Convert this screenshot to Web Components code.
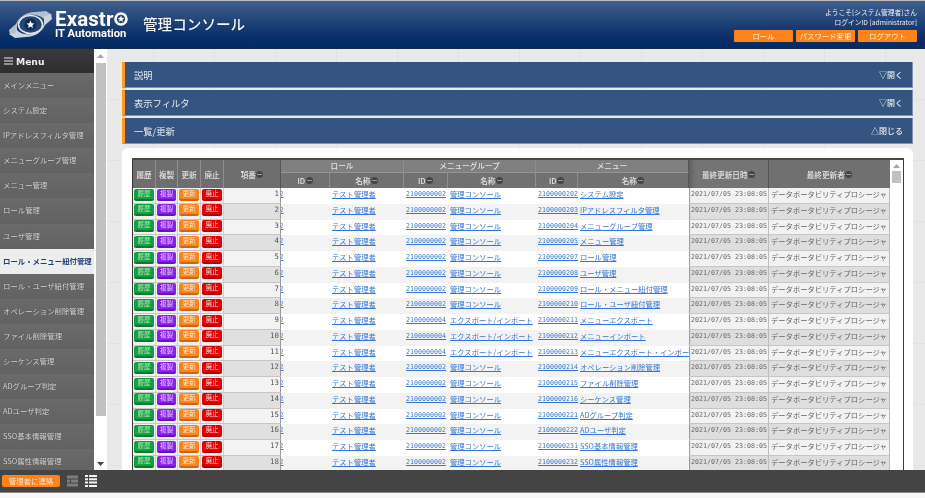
<!DOCTYPE html>
<html lang="ja"><head><meta charset="utf-8"><title>管理コンソール</title>
<style>
html,body{margin:0;padding:0;height:100%;background:#f4f4f4;overflow:hidden}
body{font-family:"Noto Sans CJK JP","Liberation Sans",sans-serif}
</style></head><body>
<x-app></x-app>
<script>
const FONT='"Noto Sans CJK JP","Liberation Sans",sans-serif';
function def(name,css,html,init){
  customElements.define(name,class extends HTMLElement{
    constructor(){super();this.attachShadow({mode:'open'}).innerHTML='<style>'+css+'</style>'+html;}
    connectedCallback(){if(init&&!this._d){this._d=1;init.call(this,this.shadowRoot);}}
  });
}
def('x-logo',`:host{display:block;width:125px;height:32px}
 .w{display:flex;align-items:center;height:100%;gap:2px}
 .t{display:flex;flex-direction:column;color:#fff;font-family:Roboto,"Liberation Sans",sans-serif;font-weight:700;padding-top:1px}
 .a{display:flex;align-items:center;font-size:20.5px;line-height:16px;height:16px;letter-spacing:.1px}
 .b{font-size:11.2px;line-height:11px;height:11px;margin-top:1px}`,
 `<div class="w"><svg width="45" height="29" viewBox="0 0 45 29">
  <path d="M1 20 L8 14 C11 7 18 2 27 2 L38 1 L44 5 L37 6 L37 10 C33 5 26 4 21 5 C14 6 9 11 9 17 L9 23 L2 25Z" fill="#b4bfce"/>
  <path d="M44 9 L37 15 C34 22 27 27 18 27 L7 28 L1 24 L8 23 L8 19 C12 24 19 25 24 24 C31 23 36 18 36 12 L36 6 L43 4Z" fill="#ccd4e0"/>
  <ellipse cx="22.500" cy="14.500" rx="12" ry="9" fill="#234675" stroke="#e6eaf0" stroke-width="1.500"/>
  <circle cx="22.500" cy="14.500" r="6" fill="#0f2c58"/>
  <path d="M22.500 10.500l1.100 2.700 2.900.2-2.200 1.900.7 2.800-2.500-1.500-2.500 1.500.7-2.800-2.200-1.900 2.900-.2z" fill="#fff"/>
 </svg>
 <div class="t"><div class="a">Exastr<svg width="14" height="14" viewBox="0 0 14 14" style="margin-left:.5px"><circle cx="7" cy="7" r="5.500" fill="none" stroke="#fff" stroke-width="2.600"/><path d="M7 3.600l.9 2.200 2.400.1-1.900 1.500.7 2.300-2.100-1.300-2.100 1.300.7-2.300-1.900-1.500 2.400-.1z" fill="#fff"/></svg></div><div class="b">IT Automation</div></div></div>`);
def('x-header',`:host{display:flex;height:47px;border-top:1px solid #bcbcbc;border-bottom:1px solid #14284a;background:linear-gradient(#3f5f8c,#0a3069 75%,#002a66);align-items:center;padding:0 8px;box-sizing:content-box;color:#fff}
 h1{margin:0 0 0 10px;font:500 14.6px/1 ${FONT};color:#f4f6fa;text-shadow:0 0 1px #0b1f40}
 .sp{flex:1}
 .u{display:flex;flex-direction:column;align-items:flex-end;font-size:6.75px;line-height:10px;color:#eef1f5;margin-top:-1px}
 .bs{display:flex;gap:3px;margin-top:3px}`,
 `<x-logo></x-logo><h1>管理コンソール</h1><div class="sp"></div>
 <div class="u"><div>ようこそ[システム管理者]さん</div><div>ログインID [administrator]</div>
 <div class="bs"><x-hbtn>ロール</x-hbtn><x-hbtn>パスワード変更</x-hbtn><x-hbtn>ログアウト</x-hbtn></div></div>`);
def('x-hbtn',`:host{display:block;width:59px;height:12px;background:#ff8318;border-radius:1px;color:#fff2e4;font-size:7.4px;line-height:12px;text-align:center;white-space:nowrap}`,'<slot></slot>');
def('x-side-item',`:host{display:block;height:25.1px;line-height:23px;padding-left:3px;font-size:7.4px;color:#d6d6d6;background:linear-gradient(#6a6a6a,#626262);white-space:nowrap;overflow:hidden;text-shadow:0 0 1px #444}
 :host([active]){background:#ededed;color:#1d3d78;font-weight:700;text-shadow:none}`,'<slot></slot>');
const MENU=['メインメニュー','システム設定','IPアドレスフィルタ管理','メニューグループ管理','メニュー管理','ロール管理','ユーザ管理','ロール・メニュー紐付管理','ロール・ユーザ紐付管理','オペレーション削除管理','ファイル削除管理','シーケンス管理','ADグループ判定','ADユーザ判定','SSO基本情報管理','SSO属性情報管理'];
def('x-sidebar',`:host{display:flex;height:100%;flex:none;overflow:hidden}
 .m{width:94px;background:#636363;display:flex;flex-direction:column;overflow:hidden}
 .h{height:24px;flex:none;background:linear-gradient(#3a3a3a,#2e2e2e);color:#eee;display:flex;align-items:center;font:700 9.2px "DejaVu Sans",sans-serif;padding-left:4px;gap:3px}
 .sb{width:13px;box-sizing:border-box;background:#fff;display:flex;flex-direction:column;align-items:center;padding:0 1px}
 .up,.dn{flex:none;height:14px;display:flex;align-items:center;justify-content:center}
 .tr{flex:none;width:10px;height:353px;background:#c1c1c1}.fill{flex:1}
 .dn{height:12px}`,
 `<div class="m"><div class="h"><svg width="9" height="8" viewBox="0 0 9 8"><path d="M0 1h9M0 4h9M0 7h9" stroke="#eee" stroke-width="1.200"/></svg>Menu</div><div id="l"></div></div>
 <div class="sb"><div class="up"><svg width="7" height="4" viewBox="0 0 7 4"><path d="M3.500 0L7 4H0z" fill="#a8a8a8"/></svg></div><div class="tr"></div><div class="fill"></div><div class="dn"><svg width="7" height="4" viewBox="0 0 7 4"><path d="M3.500 4L7 0H0z" fill="#444"/></svg></div></div>`,
 function(r){const l=r.getElementById('l');MENU.forEach((t,i)=>{const e=document.createElement('x-side-item');e.textContent=t;if(i==7)e.setAttribute('active','');l.appendChild(e);});});
def('x-panel',`:host{display:flex;height:25px;flex:none;background:#34557f;border-left:3px solid #ff9a1f;border-right:1px solid #7d93b0;border-bottom:1px solid #7d93b0;box-sizing:content-box;align-items:center;justify-content:space-between;padding:0 9px;color:#e6eaf0;font-size:9.3px}
 .r{font-size:8px;font-weight:500}`,'<span><slot></slot></span><span class="r"><slot name="r"></slot></span>');
def('x-sort',`:host{display:inline-block;width:7px;height:7px;border-radius:50%;background:#454545;position:relative;margin-left:.5px;flex:none}
 :host::after{content:"";position:absolute;left:1px;right:1px;top:3px;height:1px;background:#9a9a9a}`,'');
def('x-btn',`:host{display:block;box-sizing:border-box;width:19.500px;height:12px;margin:.5px auto 0;border-radius:2px;font-size:6.6px;line-height:9.500px;text-align:center;white-space:nowrap;color:var(--t,#fff);background:var(--c);border-bottom:2px solid var(--d)}`,'<slot></slot>');
const COLS='23px 22px 23px 23px 57px 49px 74px 44px 88px 42px 111px 80px 121px';
def('x-row',`:host{display:grid;grid-template-columns:${COLS};height:15.75px;font-size:7.3px;line-height:12.5px;white-space:nowrap}
 .c{overflow:hidden;min-width:0}
 .l{background:#f3f3f3;border-right:1px solid #cfcfcf;border-bottom:1px solid #c6c6c6;box-sizing:border-box;height:15.75px}
 :host([even]) .l{background:#f0f0f0}
 .n{text-align:right;padding-right:1px;color:#555;font:7.4px/12.5px "DejaVu Sans Mono",monospace;background:#f3f3f3;border-right:1px solid #9a9a9a}
 :host([even]) .n{background:#e0e0e0}
 .b{background:#fff}:host([even]) .b{background:#f3f3f3}
 a{color:#3377dc;text-decoration:underline}
 .m{font:6.65px/12.5px "DejaVu Sans Mono",monospace}
 .p{padding-left:2px}
 .d{background:#f2f2f2;color:#666;border-right:1px solid #bdbdbd;border-bottom:1px solid #c6c6c6;box-sizing:border-box;height:15.75px;padding-left:2px}
 :host([even]) .d{background:#dedede}
 .dt{font:6.65px/12.5px "DejaVu Sans Mono",monospace;box-shadow:inset 2px 0 1px -1px #999}`,
 `<div class="c l"><x-btn style="--c:#11a03c;--d:#0a7a2c;--t:#a9e6b9">履歴</x-btn></div>
 <div class="c l"><x-btn style="--c:#8a1ff2;--d:#6a12c0;--t:#e3cdfb">複製</x-btn></div>
 <div class="c l"><x-btn style="--c:#ff8318;--d:#d0660c;--t:#ffe9d4">更新</x-btn></div>
 <div class="c l"><x-btn style="--c:#e20000;--d:#b00000;--t:#ffd8d8">廃止</x-btn></div>
 <div class="c l n" id="n"></div>
 <div class="c b m"><a style="margin-left:-1.5px">2</a></div>
 <div class="c b p"><a>テスト管理者</a></div>
 <div class="c b m p"><a id="gi"></a></div>
 <div class="c b p"><a id="gn"></a></div>
 <div class="c b m p"><a id="mi"></a></div>
 <div class="c b p"><a id="mn"></a></div>
 <div class="c d dt">2021/07/05 23:08:05</div>
 <div class="c d">データポータビリティプロシージャ</div>`,
 function(r){for(const k of ['n','gi','gn','mi','mn'])r.getElementById(k).textContent=this.getAttribute(k);});
const G='管理コンソール',E='エクスポート/インポート';
const ROWS=[[2,G,202,'システム設定'],[2,G,203,'IPアドレスフィルタ管理'],[2,G,204,'メニューグループ管理'],[2,G,205,'メニュー管理'],[2,G,207,'ロール管理'],[2,G,208,'ユーザ管理'],[2,G,209,'ロール・メニュー紐付管理'],[2,G,210,'ロール・ユーザ紐付管理'],[4,E,211,'メニューエクスポート'],[4,E,212,'メニューインポート'],[4,E,213,'メニューエクスポート・インポート管理'],[2,G,214,'オペレーション削除管理'],[2,G,215,'ファイル削除管理'],[2,G,216,'シーケンス管理'],[2,G,221,'ADグループ判定'],[2,G,222,'ADユーザ判定'],[2,G,231,'SSO基本情報管理'],[2,G,232,'SSO属性情報管理']];
def('x-grid',`:host{display:flex;box-sizing:border-box;border:1px solid #3a3a3a;border-top:2px solid #4a4a4a;border-bottom:0;width:772px;height:312px;overflow:hidden;flex:none}
 .t{width:757px;flex:none;overflow:hidden}
 .hd{display:grid;grid-template-columns:${COLS};grid-template-rows:13px 15px;color:#e4e4e4;font-size:7.6px;font-weight:500;text-align:center}
 .hd>div{display:flex;align-items:center;justify-content:center;background:#6e6e6e;border-right:1px solid #8e8e8e;white-space:nowrap;overflow:hidden}
 .hd .g{background:#808080;border-bottom:1px solid #959595;padding-bottom:2px;box-sizing:border-box}
 .hd .s{background:#717171}
 .hd .z{background:linear-gradient(90deg,#5f5f5f,#747474 6px);border-right:1px solid #555}
 .hd .y{background:#707070;border-right:0}
 .sb{width:13px;flex:none;background:#fff;display:flex;flex-direction:column;align-items:center;padding-top:4px;box-sizing:border-box}
 .th{width:9px;height:12px;background:#c1c1c1;margin-top:3px}`,
 `<div class="t"><div class="hd">
 <div style="grid-row:1/3">履歴</div><div style="grid-row:1/3">複製</div><div style="grid-row:1/3">更新</div><div style="grid-row:1/3">廃止</div>
 <div style="grid-row:1/3;border-right-color:#555">項番<x-sort></x-sort></div>
 <div class="g" style="grid-column:6/8">ロール</div><div class="g" style="grid-column:8/10">メニューグループ</div><div class="g" style="grid-column:10/12;border-right-color:#555">メニュー</div>
 <div class="z" style="grid-column:12;grid-row:1/3">最終更新日時<x-sort></x-sort></div><div class="y" style="grid-column:13;grid-row:1/3">最終更新者<x-sort></x-sort></div>
 <div class="s" style="grid-column:6;grid-row:2">ID<x-sort></x-sort></div><div class="s" style="grid-column:7;grid-row:2">名称<x-sort></x-sort></div>
 <div class="s" style="grid-column:8;grid-row:2">ID<x-sort></x-sort></div><div class="s" style="grid-column:9;grid-row:2">名称<x-sort></x-sort></div>
 <div class="s" style="grid-column:10;grid-row:2">ID<x-sort></x-sort></div><div class="s" style="grid-column:11;grid-row:2;border-right-color:#555">名称<x-sort></x-sort></div>
 </div><div id="b"></div></div>
 <div class="sb"><svg width="7" height="4" viewBox="0 0 7 4"><path d="M3.500 0L7 4H0z" fill="#a8a8a8"/></svg><div class="th"></div></div>`,
 function(r){const b=r.getElementById('b');ROWS.forEach((x,i)=>{const e=document.createElement('x-row');
  e.setAttribute('n',i+1);e.setAttribute('gi','210000000'+x[0]);e.setAttribute('gn',x[1]);e.setAttribute('mi','2100000'+x[2]);e.setAttribute('mn',x[3]);if(i%2)e.setAttribute('even','');b.appendChild(e);});});
def('x-footer',`:host{display:flex;flex:none;height:22px;background:#444;align-items:center;padding-left:2px;gap:7px;border-bottom:1px solid #8a8a8a}
 .o{width:58px;height:12px;background:#ff8318;border-radius:2px;color:#ffe7d0;font-size:7.4px;line-height:12px;text-align:center}
 svg{display:block}`,
 `<div class="o">管理者に連絡</div>
 <svg width="11" height="12" viewBox="0 0 11 12"><path d="M0 .5h11v3H0zM0 4.500h3v3H0zM4 4.500h7v3H4zM0 8.500h11v3H0z" fill="#7d7d7d"/></svg>
 <svg width="12" height="12" viewBox="0 0 12 12"><path d="M0 0h3v2H0zM4 0h8v2H4zM0 3.300h3v2H0zM4 3.300h8v2H4zM0 6.600h3v2H0zM4 6.600h8v2H4zM0 10h3v2H0zM4 10h8v2H4z" fill="#f2f2f2"/></svg>`);
def('x-app',`:host{display:flex;flex-direction:column;width:925px;height:498px;overflow:hidden;background:#f7f7f7;filter:blur(.3px)}
 .mid{display:flex;height:421px;flex:none;overflow:hidden}
 .main{flex:1;min-width:0;background-color:#e9e9e9;background-image:linear-gradient(90deg,#e2e2e2 1px,transparent 1px),linear-gradient(#e2e2e2 1px,transparent 1px);background-size:61px 61px;background-position:-15px 50px;padding:13px 12px 0 15px;display:flex;flex-direction:column;gap:2px;overflow:hidden}
 .card{margin-top:2px;background:#fff;border-radius:6px 6px 0 0;padding:10px 10px 0 10px;flex:none;height:312px}`,
 `<x-header></x-header><div class="mid"><x-sidebar></x-sidebar><div class="main">
 <x-panel>説明<span slot="r">▽開く</span></x-panel>
 <x-panel>表示フィルタ<span slot="r">▽開く</span></x-panel>
 <x-panel>一覧/更新<span slot="r">△閉じる</span></x-panel>
 <div class="card"><x-grid></x-grid></div></div></div><x-footer></x-footer>`);
</script></body></html>
